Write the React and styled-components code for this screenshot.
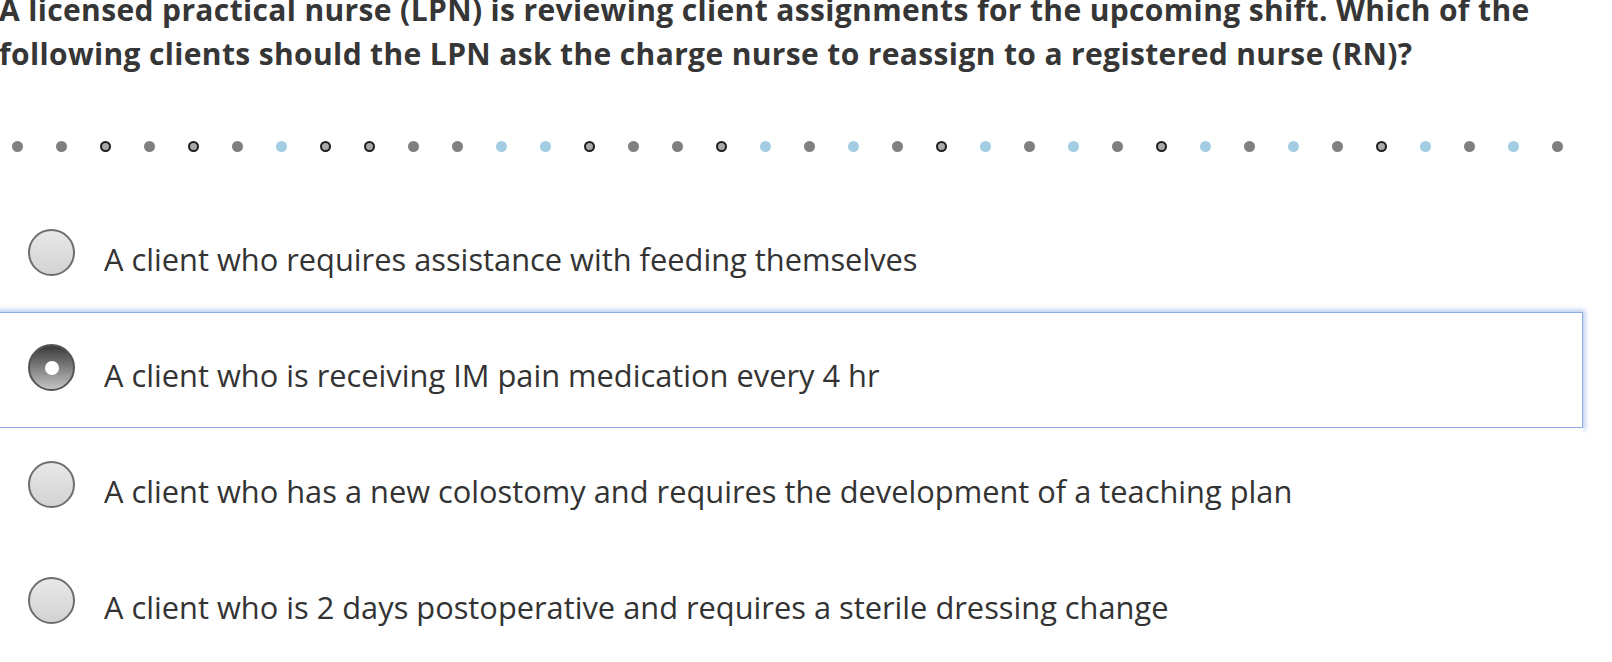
import React from "react";
import styled, { createGlobalStyle } from "styled-components";

const GlobalStyle = createGlobalStyle`
  html, body {
    margin: 0;
    padding: 0;
    background: #fff;
    overflow: hidden;
  }
  body {
    font-family: "Open Sans", "Liberation Sans", sans-serif;
    color: #333;
  }
`;

const Page = styled.div`
  margin: -12px 0 0 -10px;
  width: 1593px;
`;

const Question = styled.h1`
  margin: 0;
  padding-left: 9px;
  font-size: 30px;
  letter-spacing: 0.36px;
  line-height: 44px;
  font-weight: 700;
  color: #363636;
`;

const DotRow = styled.div`
  display: flex;
  align-items: center;
  gap: 33px;
  padding-left: 22px;
  margin-top: 64px;
  height: 12px;
`;

const Dot = styled.span`
  width: 11px;
  height: 11px;
  border-radius: 50%;
  box-sizing: border-box;
  flex: none;
  background: ${(p) =>
    p.$kind === "blue" ? "#a2cde2" : p.$kind === "ring" ? "#a9a9a9" : "#7f7f7f"};
  border: ${(p) => (p.$kind === "ring" ? "2.5px solid #1e1e1e" : "none")};
  filter: blur(0.4px);
`;

const Options = styled.div`
  margin-top: 44px;
  display: flex;
  flex-direction: column;
`;

const Row = styled.label`
  display: flex;
  align-items: flex-start;
  height: 116px;
  box-sizing: border-box;
  padding: 32px 0 0 37px;
  border: 1px solid ${(p) => (p.$selected ? "#8aaee6" : "transparent")};
  box-shadow: ${(p) => (p.$selected ? "0 0 5px 2px rgba(120, 160, 230, 0.55)" : "none")};
  background: #fff;
  cursor: pointer;
`;

const Radio = styled.span`
  width: 47px;
  height: 47px;
  flex: none;
  box-sizing: border-box;
  border-radius: 50%;
  border: 2px solid ${(p) => (p.$checked ? "#555" : "#6e6e6e")};
  background: ${(p) =>
    p.$checked
      ? "linear-gradient(to bottom, #3a3a3a, #c4c4c4)"
      : "linear-gradient(to bottom, #e8e8e8, #d3d3d3)"};
  display: flex;
  align-items: center;
  justify-content: center;
  margin-top: ${(p) => (p.$checked ? "-1px" : "0")};

  &::after {
    content: "";
    display: ${(p) => (p.$checked ? "block" : "none")};
    width: 14px;
    height: 14px;
    border-radius: 50%;
    background: #fff;
  }
`;

const OptionText = styled.span`
  margin: 10px 0 0 29px;
  font-size: 30.8px;
  line-height: 40px;
  color: #333;
`;

// g = grey, o = ring, b = blue
const dots = "ggogogbooggbboggobgbgobgbgobgbgobgbg"
  .split("")
  .map((c) => (c === "b" ? "blue" : c === "o" ? "ring" : "gray"));

const options = [
  "A client who requires assistance with feeding themselves",
  "A client who is receiving IM pain medication every 4 hr",
  "A client who has a new colostomy and requires the development of a teaching plan",
  "A client who is 2 days postoperative and requires a sterile dressing change",
];

export default function App() {
  const selected = 1;
  return (
    <>
      <GlobalStyle />
      <Page>
        <Question>
          A licensed practical nurse (LPN) is reviewing client assignments for the upcoming shift. Which of the
          following clients should the LPN ask the charge nurse to reassign to a registered nurse (RN)?
        </Question>
        <DotRow>
          {dots.map((k, i) => (
            <Dot key={i} $kind={k} />
          ))}
        </DotRow>
        <Options>
          {options.map((text, i) => (
            <Row key={i} $selected={i === selected}>
              <Radio $checked={i === selected} />
              <OptionText>{text}</OptionText>
            </Row>
          ))}
        </Options>
      </Page>
    </>
  );
}
